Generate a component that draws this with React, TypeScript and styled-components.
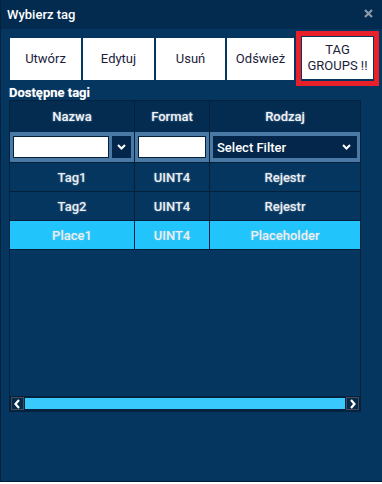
import styled, { createGlobalStyle } from "styled-components";

const GlobalStyle = createGlobalStyle`
  html, body {
    margin: 0;
    background: #ffffff;
  }
  * {
    box-sizing: border-box;
  }
`;

interface TagRow {
  name: string;
  format: string;
  kind: string;
  selected?: boolean;
}

const tags: TagRow[] = [
  { name: "Tag1", format: "UINT4", kind: "Rejestr" },
  { name: "Tag2", format: "UINT4", kind: "Rejestr" },
  { name: "Place1", format: "UINT4", kind: "Placeholder", selected: true },
];

const toolButtons = [
  { label: "Utwórz", width: 71 },
  { label: "Edytuj", width: 71 },
  { label: "Usuń", width: 69 },
  { label: "Odśwież", width: 67 },
];

// small icons
const Chevron = ({ dir }: { dir: "down" | "left" | "right" }) => {
  if (dir === "down") {
    return (
      <svg width="9" height="6" viewBox="0 0 9 6">
        <polyline points="1,1 4.5,4.5 8,1" fill="none" stroke="#fff" strokeWidth="2" />
      </svg>
    );
  }
  const pts = dir === "left" ? "6,1 2.5,5 6,9" : "3,1 6.5,5 3,9";
  return (
    <svg width="9" height="10" viewBox="0 0 9 10">
      <polyline points={pts} fill="none" stroke="#fff" strokeWidth="2.2" />
    </svg>
  );
};

function App() {
  return (
    <>
      <GlobalStyle />
      <Window>
        <TitleBar>
          <Title>Wybierz tag</Title>
          <CloseIcon width="9" height="9" viewBox="0 0 9 9">
            <path d="M1 1 L8 8 M8 1 L1 8" stroke="#8c99a7" strokeWidth="2.2" />
          </CloseIcon>
        </TitleBar>

        <Content>
          <Toolbar>
            {toolButtons.map((b) => (
              <ToolButton key={b.label} $width={b.width}>
                {b.label}
              </ToolButton>
            ))}
            <Highlight>
              <ToolButton $width={71}>
                TAG
                <br />
                GROUPS !!
              </ToolButton>
            </Highlight>
          </Toolbar>

          <SectionLabel>Dostępne tagi</SectionLabel>

          <TableFrame>
            <Grid>
              <HeadCell>Nazwa</HeadCell>
              <HeadCell>Format</HeadCell>
              <HeadCell $last>Rodzaj</HeadCell>

              <FilterCell>
                <TextInput />
                <DropButton>
                  <Chevron dir="down" />
                </DropButton>
              </FilterCell>
              <FilterCell>
                <TextInput />
              </FilterCell>
              <FilterCell $last>
                <SelectBox>
                  <span>Select Filter</span>
                  <Chevron dir="down" />
                </SelectBox>
              </FilterCell>

              {tags.map((t) => (
                <Row key={t.name} $selected={t.selected}>
                  <Cell>{t.name}</Cell>
                  <Cell>{t.format}</Cell>
                  <Cell $last>{t.kind}</Cell>
                </Row>
              ))}
            </Grid>

            <EmptyArea />

            <ScrollBar>
              <ScrollArrow>
                <Chevron dir="left" />
              </ScrollArrow>
              <ScrollThumb />
              <ScrollArrow>
                <Chevron dir="right" />
              </ScrollArrow>
            </ScrollBar>
          </TableFrame>
        </Content>
      </Window>
    </>
  );
}

export default App;

const Window = styled.div`
  width: 382px;
  height: 482px;
  background: #05365f;
  border-left: 1px solid #03213d;
  border-bottom: 1px solid #03213d;
  display: flex;
  flex-direction: column;
  font-family: Roboto, "Liberation Sans", sans-serif;
`;

// title bar
const TitleBar = styled.div`
  height: 29px;
  flex-shrink: 0;
  background: #032a4f;
  display: flex;
  align-items: center;
  justify-content: space-between;
  padding: 0 9px 1px 6px;
`;

const Title = styled.span`
  color: #ffffff;
  font-size: 13px;
  font-weight: 500;
`;

const CloseIcon = styled.svg`
  display: block;
  margin-top: -1px;
`;

const Content = styled.div`
  padding: 0 0 0 8px;
  display: flex;
  flex-direction: column;
`;

// toolbar
const Toolbar = styled.div`
  display: flex;
  align-items: center;
  gap: 2px;
  margin: 2px 0 0 1px;
`;

const ToolButton = styled.div<{ $width: number }>`
  width: ${(p) => p.$width}px;
  height: 42px;
  background: #ffffff;
  color: #1c1c3c;
  font-size: 13px;
  line-height: 16px;
  display: flex;
  align-items: center;
  justify-content: center;
  text-align: center;
`;

const Highlight = styled.div`
  border: 5px solid #e8202a;
  padding: 1px 1px 2px 1px;
  margin-left: 0px;
`;

const SectionLabel = styled.div`
  color: #ffffff;
  font-size: 13px;
  font-weight: 700;
  line-height: 15px;
  height: 15px;
  margin-top: -1px;
  text-shadow: 0 0 1px rgba(255, 255, 255, 0.4);
`;

// table
const TableFrame = styled.div`
  width: 352px;
  height: 312px;
  border: 1px solid #03223f;
  border-bottom: none;
  display: flex;
  flex-direction: column;
`;

const Grid = styled.div`
  display: grid;
  grid-template-columns: 125px 75px 150px;
`;

const HeadCell = styled.div<{ $last?: boolean }>`
  height: 31px;
  background: #042c51;
  color: #eef3f8;
  font-size: 13px;
  font-weight: 500;
  display: flex;
  align-items: center;
  justify-content: center;
  border-right: ${(p) => (p.$last ? "none" : "1px solid #03213d")};
  text-shadow: 0 0 2px rgba(200, 215, 230, 0.6);
`;

const FilterCell = styled.div<{ $last?: boolean }>`
  height: 31px;
  background: #4a79a6;
  display: flex;
  align-items: center;
  gap: 3px;
  padding: 0 3px;
  border-right: ${(p) => (p.$last ? "none" : "1px solid #03213d")};
  border-bottom: 1px solid #03213d;
`;

const TextInput = styled.div`
  flex: 1;
  height: 22px;
  background: #ffffff;
  border: 1px solid #03213d;
`;

const DropButton = styled.div`
  width: 19px;
  height: 22px;
  background: #04264a;
  display: flex;
  align-items: center;
  justify-content: center;
`;

const SelectBox = styled.div`
  flex: 1;
  height: 22px;
  background: #04264a;
  color: #ffffff;
  font-size: 13px;
  font-weight: 500;
  display: flex;
  align-items: center;
  justify-content: space-between;
  padding: 0 6px 0 4px;
`;

const Row = styled.div<{ $selected?: boolean }>`
  display: contents;
  & > div {
    background: ${(p) => (p.$selected ? "#21c5fb" : "#05365f")};
  }
`;

const Cell = styled.div<{ $last?: boolean }>`
  height: 29px;
  color: #e9eef3;
  font-size: 13px;
  font-weight: 500;
  display: flex;
  align-items: center;
  justify-content: center;
  border-right: ${(p) => (p.$last ? "none" : "1px solid #03213d")};
  border-bottom: 1px solid #03213d;
  text-shadow: 0 0 2px rgba(200, 215, 230, 0.5);
`;

const EmptyArea = styled.div`
  flex: 1;
`;

// scrollbar
const ScrollBar = styled.div`
  height: 16px;
  background: #03223f;
  display: flex;
  align-items: center;
  gap: 1px;
  padding: 0 1px 1px 1px;
`;

const ScrollArrow = styled.div`
  width: 13px;
  height: 13px;
  border: 1px solid #4b4b55;
  background: #062a4c;
  display: flex;
  align-items: center;
  justify-content: center;
`;

const ScrollThumb = styled.div`
  flex: 1;
  height: 11px;
  background: #39c9fd;
`;
